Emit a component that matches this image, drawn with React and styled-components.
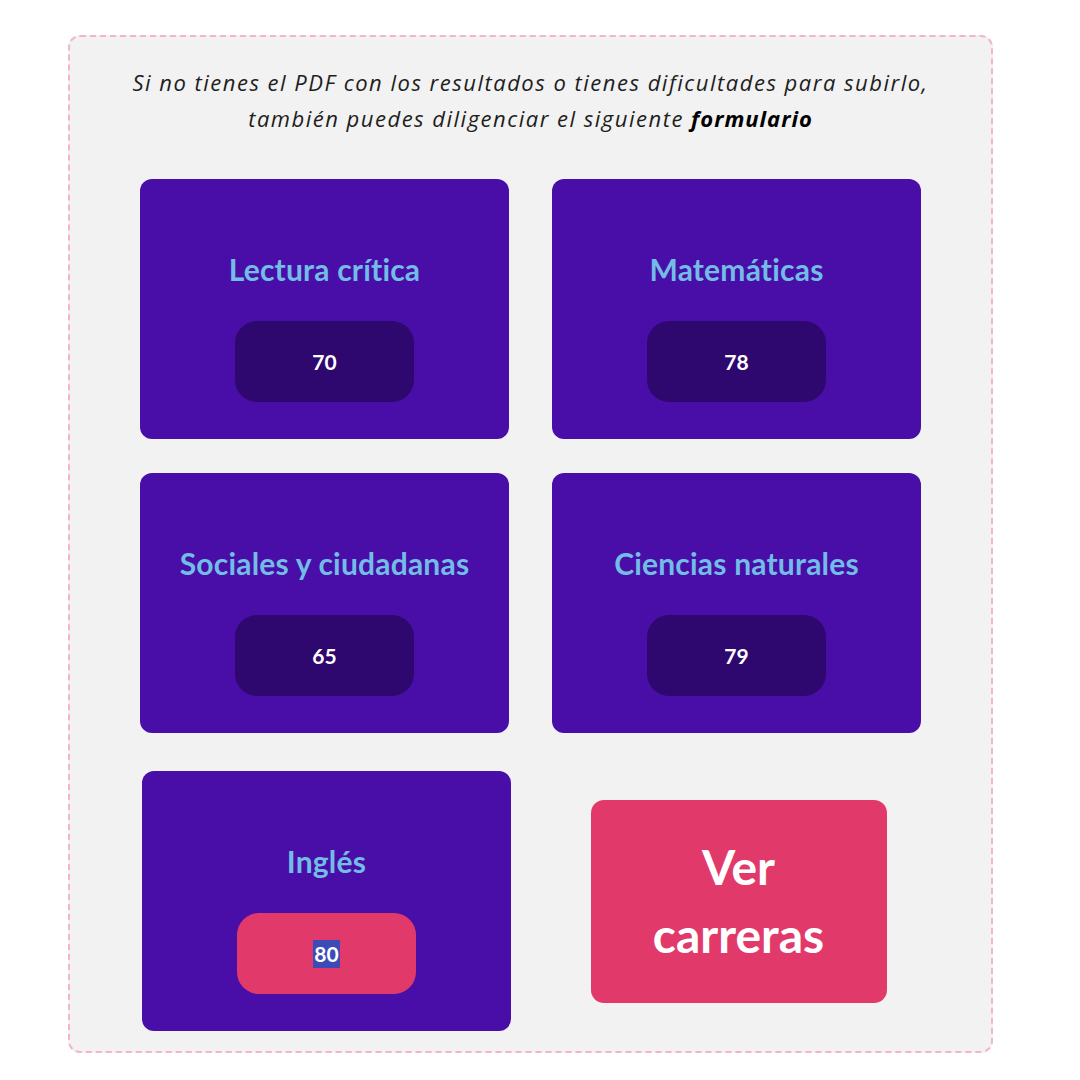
import styled, { createGlobalStyle } from 'styled-components';

const GlobalStyle = createGlobalStyle`
    body {
        margin: 0;
        background: #ffffff;
        font-family: "Lato", "Liberation Sans", sans-serif;
    }
`
const Page = styled.div`
    padding: 35px 0 0 68px;
`
const Container = styled.div`
    box-sizing: border-box;
    width: 925px;
    height: 1018px;
    background: #f2f2f2;
    border: 2px dashed #f3b6c7;
    border-radius: 12px;
    padding: 27px 70px 0 70px;
`
const Intro = styled.p`
    margin: 0 -60px 43px -60px;
    text-align: center;
    font-family: "Open Sans", "Liberation Sans", sans-serif;
    font-style: italic;
    font-size: 22px;
    letter-spacing: 1.5px;
    line-height: 36px;
    color: #1e1e1e;
`
const Strong = styled.b`
    font-weight: 700;
    letter-spacing: 1px;
    color: #000;
`
const Grid = styled.div`
    display: grid;
    grid-template-columns: 369px 369px;
    column-gap: 43px;
    row-gap: 34px;
`
const LastRow = styled.div`
    display: grid;
    grid-template-columns: 369px 369px;
    column-gap: 43px;
    margin-top: 38px;
    padding-left: 2px;
`
const Card = styled.div`
    box-sizing: border-box;
    height: 260px;
    background: #4a0ea8;
    border-radius: 12px;
    padding-top: 72px;
    display: flex;
    flex-direction: column;
    align-items: center;
`
const Title = styled.h3`
    margin: 0 0 34px 0;
    font-size: 30px;
    line-height: 36px;
    font-weight: 700;
    letter-spacing: 0.2px;
    color: #72bde6;
`
const Score = styled.div`
    width: 179px;
    height: 81px;
    border-radius: 22px;
    background: ${p => p.$active ? '#e13a6a' : '#2e086f'};
    display: flex;
    align-items: center;
    justify-content: center;
    color: #fff;
    font-size: 21px;
    font-weight: 700;
`
const Selected = styled.span`
    background: #3d4bb8;
    line-height: 28px;
    padding: 0 1px;
`
const ButtonCell = styled.div`
    display: flex;
    align-items: center;
    justify-content: center;
`
const Button = styled.button`
    width: 296px;
    height: 203px;
    border: none;
    border-radius: 13px;
    background: #e13a6a;
    color: #fff;
    font-family: "Lato", "Liberation Sans", sans-serif;
    font-size: 48px;
    font-weight: 700;
    line-height: 68px;
    padding: 0 30px;
`

const subjects = [
    { name: 'Lectura crítica', score: 70 },
    { name: 'Matemáticas', score: 78 },
    { name: 'Sociales y ciudadanas', score: 65 },
    { name: 'Ciencias naturales', score: 79 },
]

const App = () => {
    return (
        <Page>
            <GlobalStyle />
            <Container>
                <Intro>
                    Si no tienes el PDF con los resultados o tienes dificultades para subirlo,<br />
                    también puedes diligenciar el siguiente <Strong>formulario</Strong>
                </Intro>
                <Grid>
                    {subjects.map(s => (
                        <Card key={s.name}>
                            <Title>{s.name}</Title>
                            <Score>{s.score}</Score>
                        </Card>
                    ))}
                </Grid>
                <LastRow>
                    <Card>
                        <Title>Inglés</Title>
                        <Score $active><Selected>80</Selected></Score>
                    </Card>
                    <ButtonCell>
                        <Button>Ver carreras</Button>
                    </ButtonCell>
                </LastRow>
            </Container>
        </Page>
    )
}

export default App;
